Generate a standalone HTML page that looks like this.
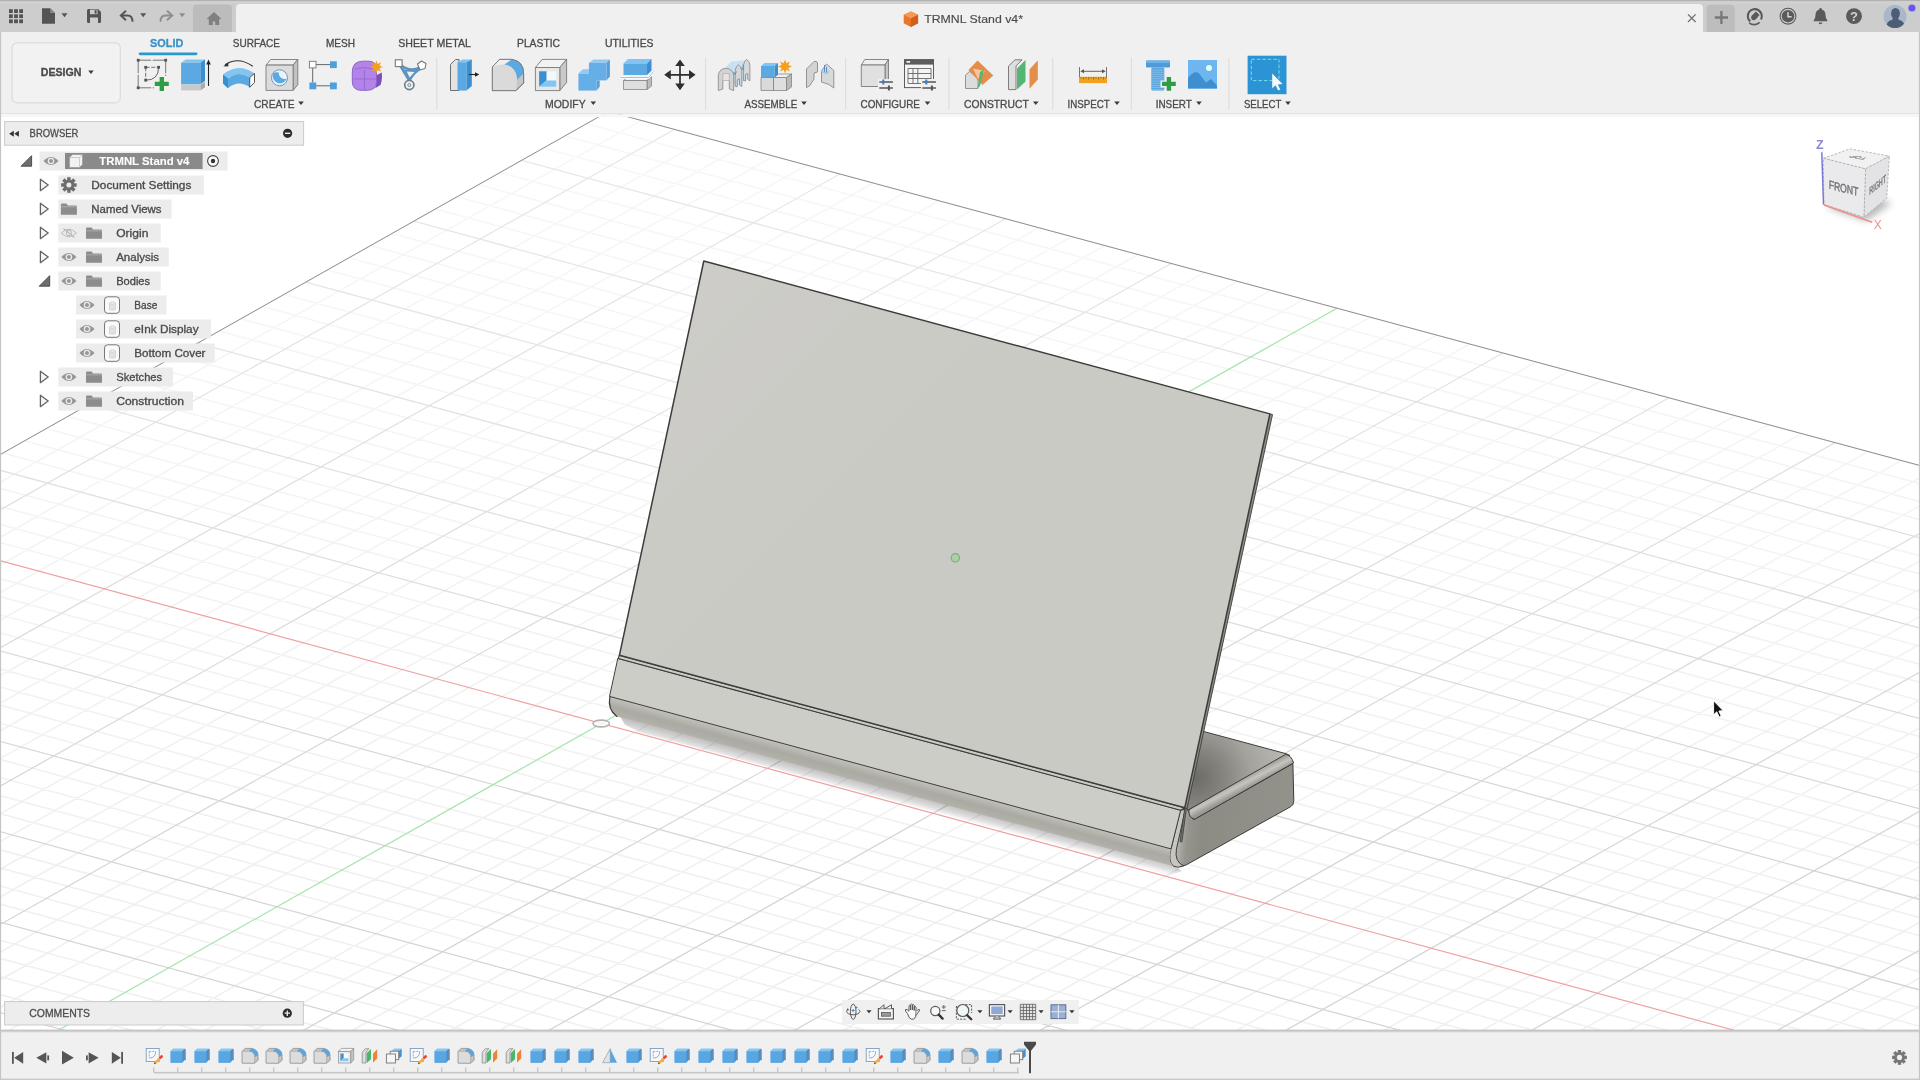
<!DOCTYPE html>
<html><head><meta charset="utf-8"><title>TRMNL Stand v4</title>
<style>
html,body{margin:0;padding:0;background:#fff;overflow:hidden;width:1920px;height:1080px}
svg{position:absolute;left:0;top:0;display:block;filter:blur(0.45px)}
text{font-family:"Liberation Sans",sans-serif}
</style></head><body>
<svg width="1920" height="1080" viewBox="0 0 1920 1080">
<defs><clipPath id="cv"><rect x="0" y="114" width="1920" height="917"/></clipPath></defs>
<rect x="0" y="0" width="1920" height="1080" fill="#ffffff"/>
<!-- grid -->
<g clip-path="url(#cv)" fill="none" shape-rendering="geometricPrecision">
<path d="M-884.0 953.5L608.2 111.5M-850.9 962.5L641.3 120.4M-784.8 980.4L707.5 138.3M-751.8 989.4L740.6 147.2M-718.7 998.4L773.7 156.2M-685.7 1007.4L806.8 165.1M-619.5 1025.4L873.0 183.0M-586.5 1034.4L906.1 191.9M-553.4 1043.4L939.3 200.8M-520.3 1052.3L972.4 209.8M-454.1 1070.3L1038.7 227.7M-421.1 1079.3L1071.8 236.6M-388.0 1088.3L1104.9 245.6M-354.9 1097.3L1138.1 254.5M-288.7 1115.3L1204.4 272.4M-255.6 1124.3L1237.5 281.3M-222.5 1133.3L1270.7 290.3M-189.3 1142.3L1303.9 299.2M-123.1 1160.3L1370.2 317.2M-90.0 1169.3L1403.4 326.1M-56.9 1178.3L1436.6 335.1M-23.7 1187.3L1469.7 344.0M42.5 1205.4L1536.1 361.9M75.7 1214.4L1569.3 370.9M108.8 1223.4L1602.5 379.8M142.0 1232.4L1635.7 388.8M208.3 1250.4L1702.1 406.7M241.4 1259.4L1735.3 415.7M274.6 1268.4L1768.5 424.7M307.8 1277.5L1801.7 433.6M374.1 1295.5L1868.2 451.5M407.3 1304.5L1901.4 460.5M440.4 1313.5L1934.6 469.5M473.6 1322.6L1967.9 478.5M540.0 1340.6L2034.3 496.4M573.2 1349.6L2067.6 505.4M606.4 1358.6L2100.8 514.3M639.6 1367.7L2134.1 523.3M706.0 1385.7L2200.6 541.3M739.2 1394.8L2233.9 550.2M772.4 1403.8L2267.1 559.2M805.6 1412.8L2300.4 568.2M872.1 1430.9L2366.9 586.2M905.3 1439.9L2400.2 595.1M938.5 1448.9L2433.5 604.1M971.8 1458.0L2466.8 613.1M1038.2 1476.0L2533.4 631.1M1071.5 1485.1L2566.7 640.1M1104.7 1494.1L2600.0 649.0M1138.0 1503.2L2633.3 658.0M1204.5 1521.2L2699.9 676.0M1237.8 1530.3L2733.2 685.0M1271.0 1539.3L2766.5 694.0M1304.3 1548.4L2799.8 703.0M-862.3 941.3L1359.3 1545.2M-840.7 929.1L1380.9 1532.9M-819.0 916.8L1402.6 1520.6M-797.4 904.6L1424.3 1508.4M-754.1 880.2L1467.7 1483.8M-732.5 868.0L1489.4 1471.6M-710.8 855.8L1511.1 1459.3M-689.2 843.6L1532.8 1447.1M-645.9 819.2L1576.1 1422.5M-624.3 807.0L1597.8 1410.3M-602.7 794.7L1619.5 1398.0M-581.0 782.5L1641.2 1385.8M-537.8 758.1L1684.6 1361.3M-516.1 745.9L1706.3 1349.0M-494.5 733.7L1727.9 1336.7M-472.9 721.5L1749.6 1324.5M-429.6 697.1L1793.0 1300.0M-408.0 684.9L1814.7 1287.7M-386.3 672.7L1836.4 1275.5M-364.7 660.5L1858.0 1263.2M-321.4 636.1L1901.4 1238.7M-299.8 623.8L1923.1 1226.4M-278.2 611.6L1944.8 1214.2M-256.5 599.4L1966.4 1201.9M-213.3 575.0L2009.8 1177.4M-191.7 562.8L2031.5 1165.2M-170.0 550.6L2053.1 1152.9M-148.4 538.4L2074.8 1140.7M-105.2 514.0L2118.2 1116.1M-83.5 501.8L2139.8 1103.9M-61.9 489.6L2161.5 1091.6M-40.3 477.4L2183.2 1079.4M2.9 453.0L2226.5 1054.9M24.6 440.8L2248.2 1042.6M46.2 428.6L2269.9 1030.4M67.8 416.4L2291.5 1018.1M111.1 392.0L2334.9 993.6M132.7 379.8L2356.6 981.4M154.3 367.6L2378.2 969.1M175.9 355.4L2399.9 956.9M219.1 331.0L2443.2 932.4M240.8 318.8L2464.9 920.1M262.4 306.6L2486.6 907.9M284.0 294.4L2508.2 895.7M327.2 270.0L2551.6 871.2M348.8 257.8L2573.2 858.9M370.4 245.6L2594.9 846.7M392.1 233.4L2616.5 834.4M435.3 209.0L2659.9 809.9M456.9 196.8L2681.5 797.7M478.5 184.7L2703.2 785.4M500.1 172.5L2724.9 773.2M543.3 148.1L2768.2 748.7M564.9 135.9L2789.8 736.5M586.6 123.7L2811.5 724.2M608.2 111.5L2833.1 712.0" stroke="#f0f0f0" stroke-width="1.6"/>
<path d="M-817.9 971.5L674.4 129.4M-652.6 1016.4L839.9 174.0M-487.2 1061.3L1005.5 218.7M-321.8 1106.3L1171.2 263.5M9.4 1196.4L1502.9 353.0M175.1 1241.4L1668.9 397.8M340.9 1286.5L1835.0 442.6M506.8 1331.6L2001.1 487.4M672.8 1376.7L2167.3 532.3M838.8 1421.8L2333.7 577.2M1005.0 1467.0L2500.1 622.1M1171.2 1512.2L2666.6 667.0M1337.6 1557.4L2833.1 712.0M-884.0 953.5L1337.6 1557.4M-775.8 892.4L1446.0 1496.1M-667.6 831.4L1554.5 1434.8M-559.4 770.3L1662.9 1373.5M-451.2 709.3L1771.3 1312.2M-343.1 648.3L1879.7 1250.9M-234.9 587.2L1988.1 1189.7M-18.7 465.2L2204.9 1067.1M89.4 404.2L2313.2 1005.9M197.5 343.2L2421.6 944.6M305.6 282.2L2529.9 883.4M413.7 221.2L2638.2 822.2M521.7 160.3L2746.5 761.0" stroke="#d4d4d4" stroke-width="1.25"/>
<linearGradient id="gFade" gradientUnits="userSpaceOnUse" x1="0" y1="114" x2="0" y2="900"><stop offset="0" stop-color="#fff" stop-opacity="0.5"/><stop offset="0.45" stop-color="#fff" stop-opacity="0.3"/><stop offset="1" stop-color="#fff" stop-opacity="0"/></linearGradient>
<rect x="0" y="114" width="1920" height="917" fill="url(#gFade)" stroke="none"/>
<path d="M-126.8 526.2L2096.5 1128.4" stroke="#ef9f9f" stroke-width="1.15"/>
<path d="M-156.2 1151.3L1337.0 308.2" stroke="#a2e4a8" stroke-width="1.2"/>
<path d="M-884.0 953.5L608.2 111.5M608.2 111.5L2833.1 712.0" stroke="#8f8f8f" stroke-width="1"/>
</g>
<!-- model -->
<defs>
<linearGradient id="gFil" gradientUnits="userSpaceOnUse" x1="890" y1="772" x2="884.6" y2="792">
<stop offset="0" stop-color="#c4c3bd"/><stop offset="0.12" stop-color="#bcbbb4"/><stop offset="0.45" stop-color="#abaaa2"/><stop offset="0.75" stop-color="#b1b0a8"/><stop offset="1" stop-color="#c1c0b9"/></linearGradient>
<radialGradient id="gTop" gradientUnits="userSpaceOnUse" cx="1196" cy="778" r="92">
<stop offset="0" stop-color="#6c6b66"/><stop offset="0.3" stop-color="#85847e"/><stop offset="0.6" stop-color="#a3a29c"/><stop offset="1" stop-color="#bab9b3"/></radialGradient>
<linearGradient id="gLip" gradientUnits="userSpaceOnUse" x1="1238" y1="781" x2="1243" y2="790.5">
<stop offset="0" stop-color="#a5a49e"/><stop offset="0.45" stop-color="#c6c5bf"/><stop offset="1" stop-color="#9a9993"/></linearGradient>
<linearGradient id="gSide" gradientUnits="userSpaceOnUse" x1="1178" y1="838" x2="1292" y2="850">
<stop offset="0" stop-color="#b3b2ac"/><stop offset="0.08" stop-color="#96958d"/><stop offset="0.2" stop-color="#8d8c84"/><stop offset="1" stop-color="#94938b"/></linearGradient>
<linearGradient id="gCor" gradientUnits="userSpaceOnUse" x1="1172" y1="838" x2="1184" y2="841">
<stop offset="0" stop-color="#c6c5c1"/><stop offset="0.5" stop-color="#b7b6b0"/><stop offset="1" stop-color="#908f87"/></linearGradient>
<linearGradient id="gPanel" gradientUnits="userSpaceOnUse" x1="700" y1="300" x2="1200" y2="800">
<stop offset="0" stop-color="#cdccc8"/><stop offset="0.42" stop-color="#c9cac4"/><stop offset="1" stop-color="#c9cac4"/></linearGradient>
</defs>
<g stroke-linejoin="round" stroke-linecap="round">
<linearGradient id="gSh" gradientUnits="userSpaceOnUse" x1="890" y1="790" x2="887.5" y2="799.5"><stop offset="0" stop-color="#000" stop-opacity="0.23"/><stop offset="0.6" stop-color="#000" stop-opacity="0.13"/><stop offset="1" stop-color="#000" stop-opacity="0.03"/></linearGradient>
<polygon points="620.0,716.0 1172.0,864.5 1182.0,871.0 1170.0,875.5 642.0,733.0 625.0,725.0" fill="url(#gSh)"/>
<polygon points="1196.0,729.4 1286.0,753.7 1290.0,755.5 1188.9,809.7 1182.0,811.0" fill="url(#gTop)" stroke="#3c3c3a" stroke-width="1"/>
<path d="M1194.0 819.5 L1292.9 763.6 L1293.8 800.5 Q1293.8 805 1290.8 806.6 L1186 865 Q1180 867.6 1175 866 L1172 850 L1181 812 L1186 808 Z" fill="url(#gSide)" stroke="#3c3c3a" stroke-width="1"/>
<path d="M1188.9 809.7 L1285.6 754.4 Q1291.5 755.5 1293.6 762.9 L1194.6 819.2 Q1188.0 817.8 1188.9 809.7 Z" fill="url(#gLip)" stroke="#3c3c3a" stroke-width="1"/>
<path d="M1180.7 810.2 L1185.3 809.4 L1176.4 849.3 Q1174.3 861.5 1183.5 865.8 Q1178 868.5 1173.5 866.2 Q1167.5 861 1171.0 848.9 Z" fill="#c7c6c2" stroke="#3c3c3a" stroke-width="1"/>
<path d="M609.9 696.5 L1171.0 848.9 Q1167.5 861 1173.5 866.2 L616.9 716.4 Q607.5 709.5 609.9 696.5 Z" fill="url(#gFil)" stroke="none"/>
<path d="M609.9 696.5 Q607.3 709.5 616.9 716.4" fill="none" stroke="#3c3c3a" stroke-width="1.2"/>
<polygon points="618.2,658.5 1180.7,810.2 1171.0,848.9 609.9,696.5" fill="#cdcdc8" stroke="#3c3c3a" stroke-width="1"/>
<polygon points="619.4,655.3 1184.8,807.7 1180.7,810.2 618.2,658.5" fill="#cbcac4" stroke="#3c3c3a" stroke-width="1.1"/>
<polygon points="1269.9,413.9 1272.5,414.6 1187.0,808.6 1184.8,807.7" fill="#8f8e88" stroke="#3c3c3a" stroke-width="0.9"/>
<path d="M1186.3 809.6 L1181.9 842 L1180 841.6 L1184.5 809.8" fill="#77766f" stroke="#3c3c3a" stroke-width="0.8"/>
<polygon points="703.8,261.0 1269.9,413.9 1184.8,807.7 619.4,655.3" fill="url(#gPanel)" stroke="#3c3c3a" stroke-width="1.5"/>
<circle cx="955.3" cy="557.8" r="4.2" fill="#a6d3a3" stroke="#8fa08c" stroke-width="1.1"/>
<ellipse cx="601.2" cy="723.5" rx="8.2" ry="3.4" fill="#fff" fill-opacity="0.8" stroke="#b3b3b3" stroke-width="1.6"/>
</g>
<!-- chrome_bg -->
<rect x="0" y="0" width="1920" height="32" fill="#cdcdcd"/>
<rect x="0" y="0" width="1920" height="1.3" fill="#b2b2b2"/>
<rect x="0" y="1.3" width="1920" height="2.4" fill="#d1d1d1"/>
<rect x="0" y="32" width="1920" height="82" fill="#f0f0f0"/>
<rect x="0" y="113.2" width="1920" height="1" fill="#e2e2e2"/>
<rect x="0" y="114.2" width="1920" height="3" fill="#f6f6f6"/>
<path d="M193 32V8.5q0-4 4-4h31q4 0 4 4V32z" fill="#bcbcbc"/>
<path d="M236 32V8q0-4 4-4H1699q4 0 4 4V32z" fill="#f0f0f0"/>
<path d="M1706.5 32V8.8q0-4 4-4h20.3q4 0 4 4V32z" fill="#bdbdbd"/>
<rect x="0" y="1030" width="1920" height="50" fill="#f0f0f0"/>
<rect x="0" y="1029.6" width="1920" height="2.2" fill="#c4c4c4"/>
<rect x="0" y="1031.8" width="1920" height="1" fill="#e6e6e6"/>
<rect x="0" y="1078.6" width="1920" height="1.4" fill="#c8c8c8"/>
<rect x="0" y="32" width="1.1" height="1048" fill="#c4c4c4"/>
<rect x="1918.9" y="32" width="1.1" height="1048" fill="#c6c6c6"/>
<!-- viewcube -->
<defs><filter id="vsh" x="-50%" y="-50%" width="200%" height="200%"><feGaussianBlur stdDeviation="3.500"/></filter></defs>
<polygon points="1826,207 1866,221 1892,203 1862,194" fill="#8a8a8a" opacity="0.6" filter="url(#vsh)"/>
<polygon points="1823.300,158.300 1850,148.900 1889.400,156.100 1865.600,168.900" fill="#f1f1f2" stroke="#a9a9a9" stroke-width="0.800" stroke-dasharray="2.500 1.500"/>
<polygon points="1865.600,168.900 1889.400,156.100 1886.700,198.300 1863.900,217.200" fill="#e3e3e5" stroke="#a9a9a9" stroke-width="0.800" stroke-dasharray="2.500 1.500"/>
<polygon points="1823.300,158.300 1865.600,168.900 1863.900,217.200 1823.900,204.400" fill="#eaeaec" stroke="#a9a9a9" stroke-width="0.800" stroke-dasharray="2.500 1.500"/>
<text transform="matrix(1 0.250 -0.020 1 1828.700 188.600)" font-size="12" fill="#747474" stroke="#747474" stroke-width="0.45" textLength="29.500" lengthAdjust="spacingAndGlyphs">FRONT</text>
<text transform="matrix(0.900 -0.720 0 1.150 1869.300 195)" font-size="9" fill="#777" stroke="#777" stroke-width="0.4" textLength="18.500" lengthAdjust="spacingAndGlyphs">RIGHT</text>
<text transform="matrix(-0.950 -0.200 0.700 -0.300 1867.500 158.300)" font-size="8.5" fill="#808080" stroke="#808080" stroke-width="0.4" textLength="16" lengthAdjust="spacingAndGlyphs">TOP</text>
<path d="M1821.800 152.200L1823.500 204.600" stroke="#7a78d2" stroke-width="1.500"/>
<path d="M1823.900 205L1872.200 222.200" stroke="#ee8f8f" stroke-width="1.500"/>
<text x="1816" y="148.500" font-size="12.500" font-weight="bold" fill="#8a88d8">Z</text>
<text x="1873.800" y="229" font-size="12" fill="#ec8c8c">X</text>
<!-- browser -->
<rect x="4.600" y="121.600" width="299" height="23.600" fill="#ededed" stroke="#cbcbcb" stroke-width="1"/>
<path d="M9.200 133.800L13.800 130.800V136.800zM14.300 133.800L18.900 130.800V136.800z" fill="#333"/>
<text x="29.6" y="136.8" font-size="10.4" fill="#4d4d4d" stroke="#4d4d4d" stroke-width="0.30" font-weight="normal" textLength="48.8" lengthAdjust="spacingAndGlyphs">BROWSER</text>
<circle cx="287.600" cy="133.300" r="4.600" fill="#2c2c2c"/><rect x="284.900" y="132.600" width="5.400" height="1.400" fill="#eee"/>
<rect x="39.6" y="151.5" width="188.0" height="19" fill="#ececec"/>
<path d="M31.6 166.2h-10.500l10.500-10.500z" fill="#6e6e6e" stroke="#444" stroke-width="0.900" stroke-linejoin="round"/>
<path d="M43.5 161.0Q51.0 152.8 58.5 161.0Q51.0 169.2 43.5 161.0z" fill="#969696"/><circle cx="51.0" cy="161.0" r="3.3" fill="#ececec"/><circle cx="51.0" cy="161.0" r="2" fill="#969696"/>
<rect x="65" y="153" width="137.600" height="16" fill="#8a8a8a"/>
<path d="M69.500 157.500L72.500 154.500H82.500V164.500L79.500 167.500H69.500z" fill="#f2f2f2" stroke="#9a9a9a" stroke-width="0.700"/><path d="M69.500 157.500H79.500V167.500M79.500 157.500L82.500 154.500" fill="none" stroke="#bdbdbd" stroke-width="0.700"/>
<text x="99.3" y="165.1" font-size="11.0" fill="#ffffff" stroke="#ffffff" stroke-width="0.10" font-weight="bold" textLength="90.1" lengthAdjust="spacingAndGlyphs">TRMNL Stand v4</text>
<circle cx="213" cy="161" r="5.400" fill="#fafafa" stroke="#444" stroke-width="1.100"/><circle cx="213" cy="161" r="2.200" fill="#333"/>
<rect x="58.3" y="175.5" width="145.5" height="19" fill="#ececec"/>
<path d="M40.4 179.3v11.400l7.800-5.700z" fill="#f6f6f6" stroke="#636363" stroke-width="1.300" stroke-linejoin="round"/>
<g transform="translate(68.900 185)"><rect x="-1.700" y="-7.800" width="3.400" height="15.600" fill="#6e6e6e" transform="rotate(0)"/><rect x="-1.700" y="-7.800" width="3.400" height="15.600" fill="#6e6e6e" transform="rotate(45)"/><rect x="-1.700" y="-7.800" width="3.400" height="15.600" fill="#6e6e6e" transform="rotate(90)"/><rect x="-1.700" y="-7.800" width="3.400" height="15.600" fill="#6e6e6e" transform="rotate(135)"/><circle r="5.600" fill="#6e6e6e"/><circle r="2.500" fill="#ececec"/></g>
<text x="91.3" y="188.8" font-size="10.4" fill="#4a4a4a" stroke="#4a4a4a" stroke-width="0.30" font-weight="normal" textLength="100.1" lengthAdjust="spacingAndGlyphs">Document Settings</text>
<rect x="58.3" y="199.5" width="113.3" height="19" fill="#ececec"/>
<path d="M40.4 203.3v11.400l7.800-5.700z" fill="#f6f6f6" stroke="#636363" stroke-width="1.300" stroke-linejoin="round"/>
<path d="M60.9 214.8v-10.200q0-1 1-1h4.500l1.500 1.800h8q1 0 1 1v8.400z" fill="#8c8c8c"/><path d="M60.9 206.8h16" stroke="#b5b5b5" stroke-width="0.800"/>
<text x="91.3" y="212.8" font-size="10.4" fill="#4a4a4a" stroke="#4a4a4a" stroke-width="0.30" font-weight="normal" textLength="70.3" lengthAdjust="spacingAndGlyphs">Named Views</text>
<rect x="58.3" y="223.5" width="102.4" height="19" fill="#ececec"/>
<path d="M40.4 227.3v11.400l7.800-5.700z" fill="#f6f6f6" stroke="#636363" stroke-width="1.300" stroke-linejoin="round"/>
<path d="M61.4 233.0Q68.9 225.4 76.4 233.0Q68.9 240.6 61.4 233.0z" fill="none" stroke="#b9b9b9" stroke-width="1"/><circle cx="68.9" cy="233.0" r="2.6" fill="none" stroke="#b9b9b9" stroke-width="1"/><path d="M63.4 228.5L74.4 237.5" stroke="#b9b9b9" stroke-width="1.1"/>
<path d="M86.0 238.8v-10.200q0-1 1-1h4.500l1.500 1.800h8q1 0 1 1v8.400z" fill="#8c8c8c"/><path d="M86.0 230.8h16" stroke="#b5b5b5" stroke-width="0.800"/>
<text x="116.2" y="236.8" font-size="10.4" fill="#4a4a4a" stroke="#4a4a4a" stroke-width="0.30" font-weight="normal" textLength="32.2" lengthAdjust="spacingAndGlyphs">Origin</text>
<rect x="58.3" y="247.5" width="110.5" height="19" fill="#ececec"/>
<path d="M40.4 251.3v11.400l7.800-5.700z" fill="#f6f6f6" stroke="#636363" stroke-width="1.300" stroke-linejoin="round"/>
<path d="M61.4 257.0Q68.9 248.8 76.4 257.0Q68.9 265.2 61.4 257.0z" fill="#969696"/><circle cx="68.9" cy="257.0" r="3.3" fill="#ececec"/><circle cx="68.9" cy="257.0" r="2" fill="#969696"/>
<path d="M86.0 262.8v-10.200q0-1 1-1h4.500l1.500 1.800h8q1 0 1 1v8.400z" fill="#8c8c8c"/><path d="M86.0 254.8h16" stroke="#b5b5b5" stroke-width="0.800"/>
<text x="116.2" y="260.8" font-size="10.4" fill="#4a4a4a" stroke="#4a4a4a" stroke-width="0.30" font-weight="normal" textLength="42.8" lengthAdjust="spacingAndGlyphs">Analysis</text>
<rect x="58.3" y="271.5" width="102.4" height="19" fill="#ececec"/>
<path d="M49.7 286.2h-10.500l10.500-10.500z" fill="#6e6e6e" stroke="#444" stroke-width="0.900" stroke-linejoin="round"/>
<path d="M61.4 281.0Q68.9 272.8 76.4 281.0Q68.9 289.2 61.4 281.0z" fill="#969696"/><circle cx="68.9" cy="281.0" r="3.3" fill="#ececec"/><circle cx="68.9" cy="281.0" r="2" fill="#969696"/>
<path d="M86.0 286.8v-10.200q0-1 1-1h4.500l1.500 1.800h8q1 0 1 1v8.400z" fill="#8c8c8c"/><path d="M86.0 278.8h16" stroke="#b5b5b5" stroke-width="0.800"/>
<text x="116.2" y="284.8" font-size="10.4" fill="#4a4a4a" stroke="#4a4a4a" stroke-width="0.30" font-weight="normal" textLength="33.9" lengthAdjust="spacingAndGlyphs">Bodies</text>
<rect x="76.0" y="295.5" width="90.5" height="19" fill="#ececec"/>
<path d="M79.5 305.0Q87.0 296.8 94.5 305.0Q87.0 313.2 79.5 305.0z" fill="#969696"/><circle cx="87.0" cy="305.0" r="3.3" fill="#ececec"/><circle cx="87.0" cy="305.0" r="2" fill="#969696"/>
<rect x="104.5" y="296.8" width="15" height="16.500" rx="3.200" fill="#fbfbfb" stroke="#777" stroke-width="1"/><path d="M109.5 303.0v6.500q3 1.600 6 0v-6.500" fill="#e2e2e2" stroke="#c4c4c4" stroke-width="0.600"/><ellipse cx="112.5" cy="303.0" rx="3" ry="1.200" fill="#f0f0f0" stroke="#c4c4c4" stroke-width="0.600"/>
<text x="134.3" y="308.8" font-size="10.4" fill="#4a4a4a" stroke="#4a4a4a" stroke-width="0.30" font-weight="normal" textLength="23.0" lengthAdjust="spacingAndGlyphs">Base</text>
<rect x="76.0" y="319.5" width="135.0" height="19" fill="#ececec"/>
<path d="M79.5 329.0Q87.0 320.8 94.5 329.0Q87.0 337.2 79.5 329.0z" fill="#969696"/><circle cx="87.0" cy="329.0" r="3.3" fill="#ececec"/><circle cx="87.0" cy="329.0" r="2" fill="#969696"/>
<rect x="104.5" y="320.8" width="15" height="16.500" rx="3.200" fill="#fbfbfb" stroke="#777" stroke-width="1"/><path d="M109.5 327.0v6.500q3 1.600 6 0v-6.500" fill="#e2e2e2" stroke="#c4c4c4" stroke-width="0.600"/><ellipse cx="112.5" cy="327.0" rx="3" ry="1.200" fill="#f0f0f0" stroke="#c4c4c4" stroke-width="0.600"/>
<text x="134.3" y="332.8" font-size="10.4" fill="#4a4a4a" stroke="#4a4a4a" stroke-width="0.30" font-weight="normal" textLength="64.3" lengthAdjust="spacingAndGlyphs">eInk Display</text>
<rect x="76.0" y="343.5" width="138.7" height="19" fill="#ececec"/>
<path d="M79.5 353.0Q87.0 344.8 94.5 353.0Q87.0 361.2 79.5 353.0z" fill="#969696"/><circle cx="87.0" cy="353.0" r="3.3" fill="#ececec"/><circle cx="87.0" cy="353.0" r="2" fill="#969696"/>
<rect x="104.5" y="344.8" width="15" height="16.500" rx="3.200" fill="#fbfbfb" stroke="#777" stroke-width="1"/><path d="M109.5 351.0v6.500q3 1.600 6 0v-6.500" fill="#e2e2e2" stroke="#c4c4c4" stroke-width="0.600"/><ellipse cx="112.5" cy="351.0" rx="3" ry="1.200" fill="#f0f0f0" stroke="#c4c4c4" stroke-width="0.600"/>
<text x="134.3" y="356.8" font-size="10.4" fill="#4a4a4a" stroke="#4a4a4a" stroke-width="0.30" font-weight="normal" textLength="71.2" lengthAdjust="spacingAndGlyphs">Bottom Cover</text>
<rect x="58.3" y="367.5" width="114.7" height="19" fill="#ececec"/>
<path d="M40.4 371.3v11.400l7.800-5.700z" fill="#f6f6f6" stroke="#636363" stroke-width="1.300" stroke-linejoin="round"/>
<path d="M61.4 377.0Q68.9 368.8 76.4 377.0Q68.9 385.2 61.4 377.0z" fill="#969696"/><circle cx="68.9" cy="377.0" r="3.3" fill="#ececec"/><circle cx="68.9" cy="377.0" r="2" fill="#969696"/>
<path d="M86.0 382.8v-10.200q0-1 1-1h4.500l1.500 1.800h8q1 0 1 1v8.400z" fill="#8c8c8c"/><path d="M86.0 374.8h16" stroke="#b5b5b5" stroke-width="0.800"/>
<text x="116.2" y="380.8" font-size="10.4" fill="#4a4a4a" stroke="#4a4a4a" stroke-width="0.30" font-weight="normal" textLength="46.0" lengthAdjust="spacingAndGlyphs">Sketches</text>
<rect x="58.3" y="391.5" width="134.6" height="19" fill="#ececec"/>
<path d="M40.4 395.3v11.400l7.800-5.700z" fill="#f6f6f6" stroke="#636363" stroke-width="1.300" stroke-linejoin="round"/>
<path d="M61.4 401.0Q68.9 392.8 76.4 401.0Q68.9 409.2 61.4 401.0z" fill="#969696"/><circle cx="68.9" cy="401.0" r="3.3" fill="#ececec"/><circle cx="68.9" cy="401.0" r="2" fill="#969696"/>
<path d="M86.0 406.8v-10.200q0-1 1-1h4.500l1.500 1.800h8q1 0 1 1v8.400z" fill="#8c8c8c"/><path d="M86.0 398.8h16" stroke="#b5b5b5" stroke-width="0.800"/>
<text x="116.2" y="404.8" font-size="10.4" fill="#4a4a4a" stroke="#4a4a4a" stroke-width="0.30" font-weight="normal" textLength="67.8" lengthAdjust="spacingAndGlyphs">Construction</text>
<!-- toolbar -->
<rect x="12" y="42.800" width="108.300" height="60" rx="5" fill="#f2f2f2" stroke="#dcdcdc" stroke-width="1.200"/>
<text x="40.8" y="75.8" font-size="10.4" fill="#4a4a4a" stroke="#4a4a4a" stroke-width="0.30" font-weight="bold" textLength="40.7" lengthAdjust="spacingAndGlyphs">DESIGN</text>
<path d="M88.2 70.6h5.6l-2.8 3.3z" fill="#3c3c3c"/>
<text x="150.0" y="47.0" font-size="10.4" fill="#3a93c8" stroke="#3a93c8" stroke-width="0.30" font-weight="bold" textLength="33.3" lengthAdjust="spacingAndGlyphs">SOLID</text>
<rect x="138.700" y="52.400" width="58.800" height="2.800" rx="1.400" fill="#2d97cc"/>
<text x="232.8" y="47.0" font-size="10.4" fill="#4a4a4a" stroke="#4a4a4a" stroke-width="0.30" font-weight="normal" textLength="47.2" lengthAdjust="spacingAndGlyphs">SURFACE</text>
<text x="326.0" y="47.0" font-size="10.4" fill="#4a4a4a" stroke="#4a4a4a" stroke-width="0.30" font-weight="normal" textLength="29.0" lengthAdjust="spacingAndGlyphs">MESH</text>
<text x="398.3" y="47.0" font-size="10.4" fill="#4a4a4a" stroke="#4a4a4a" stroke-width="0.30" font-weight="normal" textLength="72.7" lengthAdjust="spacingAndGlyphs">SHEET METAL</text>
<text x="517.0" y="47.0" font-size="10.4" fill="#4a4a4a" stroke="#4a4a4a" stroke-width="0.30" font-weight="normal" textLength="43.0" lengthAdjust="spacingAndGlyphs">PLASTIC</text>
<text x="605.0" y="47.0" font-size="10.4" fill="#4a4a4a" stroke="#4a4a4a" stroke-width="0.30" font-weight="normal" textLength="48.5" lengthAdjust="spacingAndGlyphs">UTILITIES</text>
<text x="254.0" y="107.8" font-size="10.4" fill="#4a4a4a" stroke="#4a4a4a" stroke-width="0.30" font-weight="normal" textLength="40.5" lengthAdjust="spacingAndGlyphs">CREATE</text>
<path d="M298.2 101.6h5.6l-2.8 3.3z" fill="#3a3a3a"/>
<text x="545.0" y="107.8" font-size="10.4" fill="#4a4a4a" stroke="#4a4a4a" stroke-width="0.30" font-weight="normal" textLength="40.7" lengthAdjust="spacingAndGlyphs">MODIFY</text>
<path d="M590.5 101.6h5.6l-2.8 3.3z" fill="#3a3a3a"/>
<text x="744.5" y="107.8" font-size="10.4" fill="#4a4a4a" stroke="#4a4a4a" stroke-width="0.30" font-weight="normal" textLength="52.8" lengthAdjust="spacingAndGlyphs">ASSEMBLE</text>
<path d="M801.2 101.6h5.6l-2.8 3.3z" fill="#3a3a3a"/>
<text x="860.5" y="107.8" font-size="10.4" fill="#4a4a4a" stroke="#4a4a4a" stroke-width="0.30" font-weight="normal" textLength="59.5" lengthAdjust="spacingAndGlyphs">CONFIGURE</text>
<path d="M924.7 101.6h5.6l-2.8 3.3z" fill="#3a3a3a"/>
<text x="964.0" y="107.8" font-size="10.4" fill="#4a4a4a" stroke="#4a4a4a" stroke-width="0.30" font-weight="normal" textLength="64.7" lengthAdjust="spacingAndGlyphs">CONSTRUCT</text>
<path d="M1033.0 101.6h5.6l-2.8 3.3z" fill="#3a3a3a"/>
<text x="1067.6" y="107.8" font-size="10.4" fill="#4a4a4a" stroke="#4a4a4a" stroke-width="0.30" font-weight="normal" textLength="42.2" lengthAdjust="spacingAndGlyphs">INSPECT</text>
<path d="M1114.2 101.6h5.6l-2.8 3.3z" fill="#3a3a3a"/>
<text x="1155.7" y="107.8" font-size="10.4" fill="#4a4a4a" stroke="#4a4a4a" stroke-width="0.30" font-weight="normal" textLength="36.1" lengthAdjust="spacingAndGlyphs">INSERT</text>
<path d="M1196.2 101.6h5.6l-2.8 3.3z" fill="#3a3a3a"/>
<text x="1243.9" y="107.8" font-size="10.4" fill="#4a4a4a" stroke="#4a4a4a" stroke-width="0.30" font-weight="normal" textLength="37.5" lengthAdjust="spacingAndGlyphs">SELECT</text>
<path d="M1285.2 101.6h5.6l-2.8 3.3z" fill="#3a3a3a"/>
<rect x="436.2" y="57.500" width="1.200" height="52" fill="#dedede"/>
<rect x="705.0" y="57.500" width="1.200" height="52" fill="#dedede"/>
<rect x="845.0" y="57.500" width="1.200" height="52" fill="#dedede"/>
<rect x="948.4" y="57.500" width="1.200" height="52" fill="#dedede"/>
<rect x="1052.1" y="57.500" width="1.200" height="52" fill="#dedede"/>
<rect x="1130.8" y="57.500" width="1.200" height="52" fill="#dedede"/>
<rect x="1228.3" y="57.500" width="1.200" height="52" fill="#dedede"/>
<path d="M138.200 60.200H165.700M138.200 60.200V87.800M165.700 60.200V76M138.200 87.800H154" fill="none" stroke="#6a6a6a" stroke-width="0.900" stroke-dasharray="13 1.500"/><rect x="136.8" y="58.8" width="2.800" height="2.800" fill="#555"/><rect x="164.3" y="58.8" width="2.800" height="2.800" fill="#555"/><rect x="136.8" y="86.4" width="2.800" height="2.800" fill="#555"/><path d="M145.700 67.300H158.600M145.700 67.300V80.200" fill="none" stroke="#666" stroke-width="0.900" stroke-dasharray="4 1.500"/><path d="M158.600 67.300Q158.600 80.200 145.700 80.200" fill="none" stroke="#666" stroke-width="1"/><rect x="144.3" y="65.9" width="2.800" height="2.800" fill="#555"/><rect x="157.2" y="65.9" width="2.800" height="2.800" fill="#555"/><rect x="144.3" y="78.8" width="2.800" height="2.800" fill="#555"/><path d="M154.800 83.900H168.800M161.800 76.900V90.900" stroke="#2f9d46" stroke-width="4.400" fill="none"/>
<polygon points="181.1,84.8 185.8,82.0 205.0,82.0 200.3,84.8" fill="#e8e8e8"/><polygon points="200.3,84.8 205.0,82.0 205.0,87.6 200.3,90.4" fill="#ababab"/><polygon points="181.1,84.8 200.3,84.8 200.3,90.4 181.1,90.4" fill="#c9c9c9"/><polygon points="181.1,62.8 185.8,59.5 205.0,59.5 200.3,62.8" fill="#82c4f2"/><polygon points="200.3,62.8 205.0,59.5 205.0,81.0 200.3,84.3" fill="#3b8fd1"/><polygon points="181.1,62.8 200.3,62.8 200.3,84.3 181.1,84.3" fill="#5aa9e2"/><path d="M208.500 86V62" stroke="#222" stroke-width="1.100"/><path d="M206.200 64.500L208.500 59.500L210.800 64.500z" fill="#222"/>
<path d="M252.800 66.200Q238 56 225 64.800" fill="none" stroke="#333" stroke-width="1.100"/><path d="M223.400 66.200L228.500 62.200L228.200 66.600z" fill="#333"/><path d="M223 74.500Q238.500 62 254.500 73.500L249.700 77.500Q238.500 70 228 78.500z" fill="#82c4f2"/><path d="M223 74.500L228 78.500Q238.500 70 249.700 77.500V87.300Q238.500 79.500 228 88.200L223 83.500z" fill="#5aa9e2"/><path d="M223 74.500L228 78.500V88.200L223 83.500z" fill="#3b8fd1"/><polygon points="249.7,77.5 254.5,73.5 254.5,82.5 249.7,87.3" fill="#fafafa" stroke="#444" stroke-width="0.9" stroke-linejoin="round"/>
<polygon points="266.0,65.1 270.7,59.5 297.8,59.5 293.1,65.1" fill="#ededed" stroke="#7a7a7a" stroke-width="0.9" stroke-linejoin="round"/><polygon points="293.1,65.1 297.8,59.5 297.8,84.8 293.1,90.4" fill="#c2c2c2" stroke="#7a7a7a" stroke-width="0.9" stroke-linejoin="round"/><polygon points="266.0,65.1 293.1,65.1 293.1,90.4 266.0,90.4" fill="#dcdcdc" stroke="#7a7a7a" stroke-width="0.9" stroke-linejoin="round"/><circle cx="279.500" cy="77.800" r="8" fill="#e9f3fb" stroke="#5f8fb5" stroke-width="0.900"/><path d="M273.300 73.200A7.200 7.200 0 1 0 286.700 78.800A6 6 0 0 1 278.800 72.600A7 7 0 0 0 273.300 73.200z" fill="#5aa9e2"/>
<path d="M316 64.600H330M312.700 68V82.500M316 85.800H330" stroke="#666" stroke-width="1" fill="none"/><rect x="309.400" y="61.300" width="6.600" height="6.600" fill="#fff" stroke="#777" stroke-width="0.900"/><rect x="330.0" y="61.3" width="6.800" height="6.800" fill="#4e9fdc"/><rect x="309.4" y="82.5" width="6.800" height="6.800" fill="#4e9fdc"/><rect x="330.0" y="82.5" width="6.800" height="6.800" fill="#4e9fdc"/>
<path d="M375 76L381.800 72.500Q382.500 80 380.500 85L375.500 88z" fill="#7a4fc0"/><path d="M352.300 72Q352.300 61.200 363 61.200H369Q376.500 61.200 376.500 70V82Q376.500 90.300 367 90.300H361Q352.300 90.300 352.300 81z" fill="#b483ea" stroke="#8d66c8" stroke-width="1"/><path d="M353 79H376M364.500 70V90M355 69Q364 66 374 69" stroke="#9469d2" stroke-width="0.900" fill="none"/><polygon points="383.0,67.0 379.5,68.3 381.1,71.7 377.7,70.1 376.4,73.6 375.1,70.1 371.7,71.7 373.3,68.3 369.8,67.0 373.3,65.7 371.7,62.3 375.1,63.9 376.4,60.4 377.7,63.9 381.1,62.3 379.5,65.7" fill="#f5a01c"/>
<path d="M400 65Q404 72 409 80M421 68Q414 72 409.500 80M401.500 65.500Q410 72.500 420 67.500" fill="none" stroke="#5f93bd" stroke-width="2.600"/><path d="M403.500 69.500L417.500 70.500L409.300 80z" fill="#5f93bd"/><path d="M406.800 71.500L414.500 72L409.600 77.500z" fill="#f0f0f0"/><rect x="395.300" y="59.800" width="6.800" height="6.800" fill="#fff" stroke="#777" stroke-width="1.100"/><polygon points="417.5,64.0 421.5,61.0 426.0,63.5 425.0,68.5 420.0,70.0" fill="#fff" stroke="#777" stroke-width="1.1" stroke-linejoin="round"/><circle cx="409.300" cy="85" r="4.600" fill="#f0f0f0" stroke="#6c7f8e" stroke-width="1.700"/><circle cx="409.300" cy="85" r="1.500" fill="none" stroke="#6c7f8e" stroke-width="0.900"/>
<polygon points="450.5,64.5 455.5,59.5 459.0,59.5 459.0,90.5 450.5,90.5" fill="#e4e4e4" stroke="#6f6f6f" stroke-width="1" stroke-linejoin="round"/><polygon points="457.5,62.3 462.5,59.5 471.8,59.5 466.5,62.3" fill="#82c4f2"/><polygon points="457.5,62.3 466.5,62.3 466.5,90.6 457.5,90.6" fill="#5aa9e2"/><polygon points="466.5,62.3 471.8,59.5 471.8,86.0 466.5,90.6" fill="#3b8fd1"/><path d="M469 74.500H476" stroke="#222" stroke-width="1.100"/><path d="M475 72.200L479.300 74.500L475 76.800z" fill="#222"/>
<path d="M492.400 90.600V66.900L499.500 59.400H511.700Q523.600 61 523.600 73.600V83.100L516.100 90.600z" fill="#c6c6c6" stroke="#7a7a7a" stroke-width="0.900" stroke-linejoin="round"/><path d="M492.400 66.900L499.500 59.400H511.700L504.600 64.500Q498 65.500 492.400 66.900z" fill="#efefef"/><path d="M504.600 64.500Q516.500 67 517.100 79.700L523.600 73.600Q523.600 61 511.700 59.400z" fill="#5aa9e2"/><path d="M492.400 66.900Q498 65.500 504.600 64.500Q516.500 67 517.100 79.700L516.100 90.600H492.400z" fill="#dadada"/><path d="M492.400 90.600V66.900L499.500 59.400H511.700Q523.600 61 523.600 73.600V83.100L516.100 90.600z" fill="none" stroke="#7a7a7a" stroke-width="0.900" stroke-linejoin="round"/>
<polygon points="535.4,67.5 542.2,59.4 566.6,59.4 559.8,67.5" fill="#f3f3f3" stroke="#7a7a7a" stroke-width="0.9" stroke-linejoin="round"/><polygon points="559.8,67.5 566.6,59.4 566.6,82.5 559.8,90.6" fill="#c9c9c9" stroke="#7a7a7a" stroke-width="0.9" stroke-linejoin="round"/><polygon points="535.4,67.5 559.8,67.5 559.8,90.6 535.4,90.6" fill="#e8e8e8" stroke="#7a7a7a" stroke-width="0.9" stroke-linejoin="round"/><rect x="539.100" y="71.300" width="17" height="15.500" fill="#f4f8fb"/><polygon points="539.1,71.3 546.5,71.3 546.5,80.4 539.1,86.8" fill="#3b8fd1"/><polygon points="546.5,80.4 556.1,80.4 556.1,86.8 539.1,86.8" fill="#82c4f2"/>
<polygon points="588.9,62.8 593.6,59.4 609.9,59.4 606.5,62.8" fill="#90caf5"/><polygon points="606.5,62.8 609.9,59.4 609.9,76.3 606.5,80.4" fill="#559fdb"/><polygon points="588.9,62.8 606.5,62.8 606.5,80.4 588.9,80.4" fill="#66aee6"/><polygon points="578.4,73.6 582.8,69.2 589.0,69.2 589.0,73.6" fill="#90caf5"/><polygon points="596.7,80.4 599.7,80.4 599.7,86.5 596.7,90.6" fill="#559fdb"/><polygon points="578.4,73.6 596.7,73.6 596.7,90.6 578.4,90.6" fill="#66aee6"/>
<polygon points="623.5,80.5 628.0,77.0 651.5,77.0 647.0,80.5" fill="#f2f2f2" stroke="#7a7a7a" stroke-width="0.7" stroke-linejoin="round"/><polygon points="647.0,80.5 651.5,77.0 651.5,86.0 647.0,89.5" fill="#bdbdbd" stroke="#7a7a7a" stroke-width="0.7" stroke-linejoin="round"/><polygon points="623.5,80.5 647.0,80.5 647.0,89.5 623.5,89.5" fill="#dedede" stroke="#7a7a7a" stroke-width="0.7" stroke-linejoin="round"/><path d="M620.500 77.600H648.500L653.500 71.500" fill="none" stroke="#fff" stroke-width="2.600"/><path d="M620.500 77.600H648.500L653.500 71.500" fill="none" stroke="#7fb8e4" stroke-width="0.900"/><polygon points="623.5,63.5 628.0,59.0 651.5,59.0 647.0,63.5" fill="#82c4f2"/><polygon points="647.0,63.5 651.5,59.0 651.5,70.5 647.0,75.0" fill="#3b8fd1"/><polygon points="623.5,63.5 647.0,63.5 647.0,75.0 623.5,75.0" fill="#5aa9e2"/>
<path d="M668 74.800H692M680 63V86.500" stroke="#2e2e2e" stroke-width="1.700" fill="none"/><path d="M680 59.500L684.800 66H675.200zM680 90.200L684.800 83.600H675.200zM664.200 74.800L670.800 70V79.600zM695.600 74.800L689 70V79.600z" fill="#2e2e2e"/>
<path d="M726 66.500L731.500 61.500L748 60V78L741 84L735 86z" fill="#b9dcf3" opacity="0.750"/><path d="M743.600 80.500V64.500Q744.500 60.500 746.800 59.500Q749.600 61 749.900 65.500V80.800L747.800 79.500V73.500L745.500 74.500V81z" fill="#d9d9d9" stroke="#8e8e8e" stroke-width="0.900" stroke-linejoin="round"/><path d="M735.200 86.300V70.500Q736 66 738.300 64.800Q741.300 66.300 741.800 71V86.600L739.500 85V78.800L737.300 79.800V86.800z" fill="#d6d6d6" stroke="#8e8e8e" stroke-width="0.900" stroke-linejoin="round"/><path d="M718.300 90.500V75Q719.500 68.600 726 68.300Q732.500 68.600 733.700 75V90.600L729.300 88.800V80.500H722.800V89z" fill="#d3d3d3" stroke="#8e8e8e" stroke-width="0.900" stroke-linejoin="round"/><path d="M722.800 80.500V73.500H729.300V80.500" fill="#e4e4e4" stroke="#a5a5a5" stroke-width="0.600"/><path d="M733.500 72L735 74.500L736.500 71.500M741.500 67.500L743 70V64.500" fill="none" stroke="#4d8fcc" stroke-width="0.900"/>
<polygon points="761.0,77.5 761.0,77.5 773.5,77.5 773.5,77.5" fill="#eee" stroke="#7a7a7a" stroke-width="0.7" stroke-linejoin="round"/><polygon points="773.5,77.5 773.5,77.5 773.5,90.5 773.5,90.5" fill="#bbb" stroke="#7a7a7a" stroke-width="0.7" stroke-linejoin="round"/><polygon points="761.0,77.5 773.5,77.5 773.5,90.5 761.0,90.5" fill="#dadada" stroke="#7a7a7a" stroke-width="0.7" stroke-linejoin="round"/><polygon points="773.5,77.5 778.5,74.0 791.5,74.0 786.5,77.5" fill="#f0f0f0" stroke="#7a7a7a" stroke-width="0.7" stroke-linejoin="round"/><polygon points="786.5,77.5 791.5,74.0 791.5,87.0 786.5,90.5" fill="#b9b9b9" stroke="#7a7a7a" stroke-width="0.7" stroke-linejoin="round"/><polygon points="773.5,77.5 786.5,77.5 786.5,90.5 773.5,90.5" fill="#dedede" stroke="#7a7a7a" stroke-width="0.7" stroke-linejoin="round"/><polygon points="761.0,66.0 764.5,63.0 778.0,63.0 774.5,66.0" fill="#82c4f2"/><polygon points="774.5,66.0 778.0,63.0 778.0,74.5 774.5,77.5" fill="#3b8fd1"/><polygon points="761.0,66.0 774.5,66.0 774.5,77.5 761.0,77.5" fill="#5aa9e2"/><polygon points="792.0,66.5 788.3,67.9 789.9,71.4 786.4,69.8 785.0,73.5 783.6,69.8 780.1,71.4 781.7,67.9 778.0,66.5 781.7,65.1 780.1,61.6 783.6,63.2 785.0,59.5 786.4,63.2 789.9,61.6 788.3,65.1" fill="#f5a01c"/>
<path d="M806.500 87.500V69L814 61.500Q817 60.500 817.500 63V72L814 73V79L809.500 86z" fill="#d3d3d3" stroke="#8a8a8a" stroke-width="0.900"/><path d="M821.500 71L826.500 64L833.800 70.500V88L829 84.500L821.500 82z" fill="#d9d9d9" stroke="#8a8a8a" stroke-width="0.900"/><path d="M824.500 65V72.500M826.500 67V74" stroke="#3f86c4" stroke-width="0.900"/><path d="M821.500 71Q825 74.500 829 71.500" stroke="#9fc5e6" stroke-width="1.600" fill="none"/>
<polygon points="861.3,65.0 864.8,59.5 888.5,59.5 885.0,65.0" fill="#efefef" stroke="#7a7a7a" stroke-width="0.9" stroke-linejoin="round"/><polygon points="885.0,65.0 888.5,59.5 888.5,81.0 885.0,86.5" fill="#c6c6c6" stroke="#7a7a7a" stroke-width="0.9" stroke-linejoin="round"/><polygon points="861.3,65.0 885.0,65.0 885.0,86.5 861.3,86.5" fill="#e0e0e0" stroke="#7a7a7a" stroke-width="0.9" stroke-linejoin="round"/><rect x="878" y="79" width="16" height="13" fill="#f0f0f0"/><path d="M879.3 82.0h13.600M879.3 88.0h13.600" stroke="#555" stroke-width="1.500"/><path d="M883.3 79.5v5" stroke="#3a7fc0" stroke-width="2"/><path d="M888.9 85.5v5" stroke="#555" stroke-width="2"/>
<rect x="904.500" y="59.600" width="29" height="28" fill="#f4f4f4" stroke="#5c5c5c" stroke-width="1"/><rect x="904.500" y="59.600" width="29" height="5" fill="#5c5c5c"/><rect x="906.500" y="61" width="3.600" height="1.800" fill="#eee"/><path d="M908 68.500H931V83.500H908zM908 73.500H931M908 78.500H931M913 68.500V83.500M917.800 68.500V83.500" fill="none" stroke="#666" stroke-width="0.900"/><rect x="921" y="79" width="16" height="13" fill="#f0f0f0"/><path d="M922.3 82.0h13.600M922.3 88.0h13.600" stroke="#555" stroke-width="1.500"/><path d="M926.3 79.5v5" stroke="#3a7fc0" stroke-width="2"/><path d="M931.9 85.5v5" stroke="#555" stroke-width="2"/>
<path d="M965.500 88.500V75L969.500 71.500L978 77.500V88.500z" fill="#dcdcdc" stroke="#8a8a8a" stroke-width="0.900"/><polygon points="977.5,60.6 993.3,75.5 982.5,85.0 968.5,70.0" fill="#e58d4a"/><polygon points="973.0,68.5 985.0,71.0 978.0,79.0" fill="#f4c6a0"/><polygon points="980.0,72.0 984.0,69.5 980.0,86.0 977.5,88.5" fill="#55b674"/>
<polygon points="1008.5,66.0 1015.0,59.8 1022.0,59.8 1016.0,66.0 1016.0,89.6 1008.5,89.6" fill="#dedede" stroke="#7d7d7d" stroke-width="1" stroke-linejoin="round"/><polygon points="1017.0,68.5 1025.5,60.0 1025.5,81.5 1017.0,89.5" fill="#55b674"/><polygon points="1029.5,69.5 1037.8,60.3 1037.8,79.5 1029.5,88.8" fill="#e58d4a"/>
<rect x="1079" y="76.800" width="28" height="6.300" fill="#f2a21e"/><path d="M1081.0 77v1.6M1083.5 77v2.5M1086.0 77v1.6M1088.5 77v2.5M1091.0 77v1.6M1093.5 77v2.5M1096.0 77v1.6M1098.5 77v2.5M1101.0 77v1.6M1103.5 77v2.5M1106.0 77v1.6" stroke="#8a5a10" stroke-width="0.700"/><path d="M1079.500 67V77M1106.500 67V77" stroke="#666" stroke-width="0.900"/><path d="M1082 71.300H1104" stroke="#555" stroke-width="0.900"/><path d="M1080.300 71.300L1084 69.300V73.300zM1105.700 71.300L1102 69.300V73.300z" fill="#555"/>
<rect x="1146" y="60.400" width="24" height="7.200" rx="1" fill="#4f9bd8"/><rect x="1146" y="60.400" width="24" height="2.500" rx="1" fill="#6db3e8"/><rect x="1151.300" y="67.600" width="13" height="23" rx="1.500" fill="#5aa5de"/><path d="M1151.300 70.0h13M1151.300 72.2h13M1151.300 74.4h13M1151.300 76.6h13M1151.300 78.8h13M1151.300 81.0h13M1151.300 83.2h13M1151.300 85.4h13M1151.300 87.6h13M1151.300 89.8h13" stroke="#8cc4ee" stroke-width="0.800"/><path d="M1160.500 83.900H1177M1168.800 75.600V92.200" stroke="#f0f0f0" stroke-width="7" fill="none"/><path d="M1162 83.900H1175.800M1168.900 77V90.800" stroke="#2f9d46" stroke-width="4.400" fill="none"/>
<rect x="1188" y="60" width="29" height="28.500" fill="#6db6f0"/><path d="M1188 78Q1194.500 69.500 1199 73.500L1206 82.500L1211 79L1217 85.500V88.500H1188z" fill="#3d8fd0"/><circle cx="1209" cy="68" r="3" fill="#e2ffec"/>
<rect x="1247.600" y="55.700" width="38.900" height="38.500" fill="#2b94d4"/><rect x="1251.300" y="59.300" width="27.700" height="21.300" fill="none" stroke="#7fe6e6" stroke-width="0.900" stroke-dasharray="3.500 2"/><path d="M1272.200 73.600V88.300L1275.600 85.300L1278.200 90.500L1280.300 89.500L1277.800 84.500L1282.500 84z" fill="#f4fbff"/>
<!-- topbar -->
<g fill="#545454"><rect x="9.0" y="9.2" width="3.8" height="3.8"/><rect x="14.1" y="9.2" width="3.8" height="3.8"/><rect x="19.2" y="9.2" width="3.8" height="3.8"/><rect x="9.0" y="14.3" width="3.8" height="3.8"/><rect x="14.1" y="14.3" width="3.8" height="3.8"/><rect x="19.2" y="14.3" width="3.8" height="3.8"/><rect x="9.0" y="19.4" width="3.8" height="3.8"/><rect x="14.1" y="19.4" width="3.8" height="3.8"/><rect x="19.2" y="19.4" width="3.8" height="3.8"/></g>
<path d="M42 8.3h8.2l4.8 4.8V23.8H42z" fill="#545454"/><path d="M50.2 8.3v4.8h4.8z" fill="#8a8a8a"/>
<path d="M61.5 13.2h6l-3 4z" fill="#545454"/>
<path d="M87 10.5q0-1.5 1.5-1.5H98l3 3v9.5q0 1.5-1.5 1.5h-11q-1.500 0-1.500-1.500z" fill="#545454"/>
<rect x="90" y="9.600" width="7.500" height="4.600" fill="#cdcdcd"/><rect x="94.6" y="10.200" width="2" height="3.400" fill="#545454"/><rect x="90" y="17.500" width="8" height="5.500" fill="#cdcdcd"/>
<path d="M126 10.800L120.800 15.500L126 20.200" fill="none" stroke="#545454" stroke-width="1.900"/><path d="M121.500 15.500H127.500q5 0 5 6.300" fill="none" stroke="#545454" stroke-width="1.900"/>
<path d="M140.200 13.200h6l-3 4z" fill="#545454"/>
<path d="M167 10.800L172.200 15.500L167 20.200" fill="none" stroke="#8e8e8e" stroke-width="1.900"/><path d="M171.500 15.500H165.500q-5 0-5 6.300" fill="none" stroke="#8e8e8e" stroke-width="1.900"/>
<path d="M179.200 13.200h6l-3 4z" fill="#8e8e8e"/>
<path d="M214 12L206.500 19h2.300v6h4v-3.600h2.400V25h4v-6h2.300z" fill="#808080"/>
<g transform="translate(910.9 19.1) scale(1.16 1.2)"><path d="M0 -6.300L6.200 -3.600V3.400L0 6.600L-6.200 3.400V-3.600z" fill="#e8762c"/><path d="M0 -6.300L6.200 -3.600L0 -0.600L-6.200 -3.600z" fill="#f59a55"/><path d="M0 -0.600L6.200 -3.600V3.400L0 6.600z" fill="#cf5f1c"/></g>
<text x="924.2" y="23.2" font-size="11" fill="#4c4c4c" stroke="#4c4c4c" stroke-width="0.15" textLength="98.8" lengthAdjust="spacingAndGlyphs">TRMNL Stand v4*</text>
<path d="M1688 14.400l7.600 7.600M1695.600 14.400l-7.600 7.600" stroke="#6f6f6f" stroke-width="1.300" fill="none"/>
<path d="M1714.800 17.500h13.200M1721.400 11v13" stroke="#777" stroke-width="2.300" fill="none"/>
<g transform="translate(1754.800 16.200)"><path d="M-4.6 5.2A7 7 0 1 1 6.2 3.2" fill="none" stroke="#5a5a5a" stroke-width="2.1"/><path d="M-5.6 6.6A7.6 7.6 0 0 0 4.8 6.2" fill="none" stroke="#5a5a5a" stroke-width="1.7"/><path d="M1.2 -4.8L4.8 -1.2L0.6 3.6Q-1.6 4.6 -3 3.2Q-4.4 1.6 -3.2 -0.4z" fill="#5a5a5a"/><path d="M3 -6.4L6.6 -2.8" stroke="#5a5a5a" stroke-width="1.5"/></g>
<g transform="translate(1788 16.200)"><circle r="7.900" fill="none" stroke="#5a5a5a" stroke-width="1.100"/><circle r="6.200" fill="#5a5a5a"/><path d="M0 -4.200V0.600H3.600" fill="none" stroke="#d8d8d8" stroke-width="1.400"/></g>
<g transform="translate(1820.500 16)"><path d="M0 -8q1.300 0 1.300 1.400q3.700 1 3.700 5.600q0 3.500 1.800 5.200v1h-13.600v-1q1.800-1.700 1.800-5.200q0-4.600 3.700-5.600q0-1.400 1.300-1.400z" fill="#5a5a5a"/><path d="M-1.800 6.600h3.600q0 1.600-1.800 1.600t-1.800-1.600z" fill="#5a5a5a"/></g>
<g transform="translate(1854 16.200)"><circle r="7.900" fill="#5a5a5a"/><text x="0" y="4.600" font-size="13" font-weight="bold" fill="#d4d4d4" text-anchor="middle">?</text></g>
<g transform="translate(1895 16.500)"><clipPath id="avc"><circle r="11.500"/></clipPath><circle r="11.500" fill="#aab6c9"/><g clip-path="url(#avc)"><ellipse cx="0.500" cy="-3" rx="4.400" ry="5.600" fill="#4d5d75"/><path d="M-9 12q0-7.500 6-8.500l1-2h5l1 2q6 1 6 8.500z" fill="#4d5d75"/></g></g>
<circle cx="1911.900" cy="8" r="3.600" fill="#6658ee"/>
<!-- bottom -->
<rect x="4.600" y="1001.600" width="298.800" height="23.400" fill="#ededed" stroke="#cbcbcb" stroke-width="1"/>
<text x="29.3" y="1016.7" font-size="10.4" fill="#4d4d4d" stroke="#4d4d4d" stroke-width="0.30" font-weight="normal" textLength="60.7" lengthAdjust="spacingAndGlyphs">COMMENTS</text>
<circle cx="287.300" cy="1013.200" r="4.600" fill="#2c2c2c"/><path d="M284.600 1013.200h5.400M287.300 1010.500v5.400" stroke="#eee" stroke-width="1.300"/>
<rect x="842" y="1000" width="236.800" height="24" fill="#f0f0f0"/>
<g fill="none" stroke="#5a5a5a" stroke-width="1"><ellipse cx="853.200" cy="1011.700" rx="2.800" ry="7.600"/><path d="M848 1009.500Q845 1011.500 848.500 1013.800Q853 1016 858 1013.800Q861.500 1011.500 858.500 1009.500"/></g><path d="M851.500 1010.500h3.200M853.100 1009v3.200M855.500 1007.500h2M856.500 1006.500v2" stroke="#3f86c4" stroke-width="0.900"/><path d="M846.500 1010.300l1.300-2.300l1.300 2.300z" fill="#5a5a5a"/>
<path d="M866.4 1010.2h5.2l-2.6 3.1z" fill="#333"/>
<rect x="878.400" y="1008.600" width="15" height="10.400" fill="#f4f4f4" stroke="#5a5a5a" stroke-width="1.200"/><rect x="881.400" y="1012.400" width="9" height="3.800" fill="#9a9a9a" stroke="#5a5a5a" stroke-width="0.800"/><path d="M879.500 1008.600L884 1004.800V1008.600M885 1008.600L891.500 1004.800V1008.600" fill="#f4f4f4" stroke="#5a5a5a" stroke-width="1"/>
<path d="M907.500 1013.500Q904.500 1010.500 905.500 1009.500Q906.800 1008.800 909 1011.200V1005.800Q909.700 1004.600 910.600 1005.800V1010V1004.600Q911.400 1003.400 912.400 1004.600V1010V1005Q913.300 1004 914.200 1005.200V1010.500V1006.800Q915.200 1005.800 916 1007V1014Q916 1019.300 911.800 1019.300Q909 1019.300 907.500 1013.500z" fill="#fafafa" stroke="#5a5a5a" stroke-width="1"/>
<path d="M917 1010.500Q919.500 1008.500 919.800 1010L916 1015.500" fill="#fafafa" stroke="#5a5a5a" stroke-width="1"/>
<circle cx="935.300" cy="1011" r="4.600" fill="#f6f9fb" stroke="#5a5a5a" stroke-width="1.200"/><path d="M938.700 1014.600L942.600 1018.600" stroke="#333" stroke-width="2.300" stroke-linecap="round"/><path d="M941.800 1007h4M943.800 1005v4M941.800 1010.600h4" stroke="#5a5a5a" stroke-width="0.900"/>
<path d="M956.400 1006V1019.200H967M962 1004.600H971.600V1013" fill="none" stroke="#5a5a5a" stroke-width="1" stroke-dasharray="2 1.400"/><circle cx="962.800" cy="1010.500" r="6" fill="#f1f7f7" stroke="#5a5a5a" stroke-width="1.200"/><path d="M967.200 1015.200L971.200 1019.200" stroke="#333" stroke-width="2.300" stroke-linecap="round"/>
<path d="M977.3 1010.2h5.2l-2.6 3.1z" fill="#333"/>
<rect x="989.400" y="1004.600" width="15.200" height="11.400" fill="#f4f4f4" stroke="#5a5a5a" stroke-width="1.200"/><rect x="991.300" y="1006.500" width="11.400" height="7.600" fill="#8fa8d6"/><path d="M995 1016v2h-1.500v1.300h7v-1.300h-1.500v-2" fill="#bbb" stroke="#5a5a5a" stroke-width="0.700"/>
<path d="M1007.5 1010.2h5.2l-2.6 3.1z" fill="#333"/>
<rect x="1020.300" y="1004.300" width="15.400" height="15.400" fill="#e6e6e6"/><path d="M1020.3 1004.300v15.400M1020.300 1004.3h15.400M1023.4 1004.300v15.400M1020.300 1007.4h15.400M1026.5 1004.300v15.400M1020.300 1010.5h15.400M1029.5 1004.300v15.400M1020.300 1013.5h15.400M1032.6 1004.300v15.400M1020.300 1016.6h15.400M1035.7 1004.300v15.400M1020.300 1019.7h15.400" stroke="#6a6a6a" stroke-width="0.900"/>
<path d="M1038.5 1010.2h5.2l-2.6 3.1z" fill="#333"/>
<rect x="1051" y="1004.800" width="14.800" height="13.800" fill="#9bb0d4" stroke="#5c6f8f" stroke-width="1"/><path d="M1058.400 1004.800v13.800M1051 1011.700h14.800" stroke="#e4e9f2" stroke-width="1.1"/>
<path d="M1069.3 1010.2h5.2l-2.6 3.1z" fill="#333"/>
<rect x="12" y="1051.900" width="1.800" height="11.900" fill="#555"/><path d="M23.200 1051.900V1063.800L14.200 1057.850z" fill="#555"/>
<path d="M46.400 1052.300V1063.400L36.300 1057.850z" fill="#555"/><rect x="47.300" y="1055.400" width="1.800" height="4.900" fill="#555"/>
<path d="M62 1050.800V1064.600L73.800 1057.700z" fill="#555"/>
<rect x="86" y="1055.400" width="1.800" height="4.900" fill="#555"/><path d="M88.600 1052.300V1063.400L98.600 1057.850z" fill="#555"/>
<path d="M111.800 1051.900V1063.800L120.800 1057.850z" fill="#555"/><rect x="121.200" y="1051.900" width="1.800" height="11.900" fill="#555"/>
<rect x="154" y="1071.900" width="865" height="1.600" fill="#c6c6c6"/>
<rect x="153.0" y="1067.500" width="1.400" height="5" fill="#c6c6c6"/><rect x="177.0" y="1067.500" width="1.400" height="5" fill="#c6c6c6"/><rect x="201.0" y="1067.500" width="1.400" height="5" fill="#c6c6c6"/><rect x="225.0" y="1067.500" width="1.400" height="5" fill="#c6c6c6"/><rect x="249.0" y="1067.500" width="1.400" height="5" fill="#c6c6c6"/><rect x="273.0" y="1067.500" width="1.400" height="5" fill="#c6c6c6"/><rect x="297.0" y="1067.500" width="1.400" height="5" fill="#c6c6c6"/><rect x="321.0" y="1067.500" width="1.400" height="5" fill="#c6c6c6"/><rect x="345.0" y="1067.500" width="1.400" height="5" fill="#c6c6c6"/><rect x="369.0" y="1067.500" width="1.400" height="5" fill="#c6c6c6"/><rect x="393.0" y="1067.500" width="1.400" height="5" fill="#c6c6c6"/><rect x="417.0" y="1067.500" width="1.400" height="5" fill="#c6c6c6"/><rect x="441.0" y="1067.500" width="1.400" height="5" fill="#c6c6c6"/><rect x="465.0" y="1067.500" width="1.400" height="5" fill="#c6c6c6"/><rect x="489.0" y="1067.500" width="1.400" height="5" fill="#c6c6c6"/><rect x="513.0" y="1067.500" width="1.400" height="5" fill="#c6c6c6"/><rect x="537.0" y="1067.500" width="1.400" height="5" fill="#c6c6c6"/><rect x="561.0" y="1067.500" width="1.400" height="5" fill="#c6c6c6"/><rect x="585.0" y="1067.500" width="1.400" height="5" fill="#c6c6c6"/><rect x="609.0" y="1067.500" width="1.400" height="5" fill="#c6c6c6"/><rect x="633.0" y="1067.500" width="1.400" height="5" fill="#c6c6c6"/><rect x="657.0" y="1067.500" width="1.400" height="5" fill="#c6c6c6"/><rect x="681.0" y="1067.500" width="1.400" height="5" fill="#c6c6c6"/><rect x="705.0" y="1067.500" width="1.400" height="5" fill="#c6c6c6"/><rect x="729.0" y="1067.500" width="1.400" height="5" fill="#c6c6c6"/><rect x="753.0" y="1067.500" width="1.400" height="5" fill="#c6c6c6"/><rect x="777.0" y="1067.500" width="1.400" height="5" fill="#c6c6c6"/><rect x="801.0" y="1067.500" width="1.400" height="5" fill="#c6c6c6"/><rect x="825.0" y="1067.500" width="1.400" height="5" fill="#c6c6c6"/><rect x="849.0" y="1067.500" width="1.400" height="5" fill="#c6c6c6"/><rect x="873.0" y="1067.500" width="1.400" height="5" fill="#c6c6c6"/><rect x="897.0" y="1067.500" width="1.400" height="5" fill="#c6c6c6"/><rect x="921.0" y="1067.500" width="1.400" height="5" fill="#c6c6c6"/><rect x="945.0" y="1067.500" width="1.400" height="5" fill="#c6c6c6"/><rect x="969.0" y="1067.500" width="1.400" height="5" fill="#c6c6c6"/><rect x="993.0" y="1067.500" width="1.400" height="5" fill="#c6c6c6"/><rect x="1017.0" y="1067.500" width="1.400" height="5" fill="#c6c6c6"/>
<rect x="146.2" y="1048.5" width="13" height="13" fill="#f6f8fa" stroke="#7f9dc0" stroke-width="0.900"/><path d="M149.2 1051.5h6.500M149.2 1051.5v6.500" stroke="#8a9bb0" stroke-width="0.800" stroke-dasharray="2 1"/><path d="M155.7 1051.5q0 6.500 -6.500 6.500" fill="none" stroke="#8a9bb0" stroke-width="0.800"/><path d="M155.2 1062.9l6-6" stroke="#f1b24a" stroke-width="2.600" stroke-linecap="round"/><path d="M160.4 1057.7l1.300-1.300" stroke="#e0483a" stroke-width="2.600" stroke-linecap="round"/><path d="M154.3 1063.8l1-1" stroke="#555" stroke-width="1.400"/>
<polygon points="170.4,1051.1 173.2,1048.5 184.7,1048.5 182.1,1051.1" fill="#86c6f2"/><polygon points="182.1,1051.1 184.7,1048.5 184.7,1059.9 182.1,1062.9" fill="#4291d0"/><rect x="170.4" y="1051.1" width="11.700" height="11.800" fill="#58a6e2"/><path d="M185.1 1049.2v11" stroke="#2d4d6a" stroke-width="0.800"/>
<polygon points="194.4,1051.1 197.2,1048.5 208.7,1048.5 206.1,1051.1" fill="#86c6f2"/><polygon points="206.1,1051.1 208.7,1048.5 208.7,1059.9 206.1,1062.9" fill="#4291d0"/><rect x="194.4" y="1051.1" width="11.700" height="11.800" fill="#58a6e2"/><path d="M209.1 1049.2v11" stroke="#2d4d6a" stroke-width="0.800"/>
<polygon points="218.4,1051.1 221.2,1048.5 232.7,1048.5 230.1,1051.1" fill="#86c6f2"/><polygon points="230.1,1051.1 232.7,1048.5 232.7,1059.9 230.1,1062.9" fill="#4291d0"/><rect x="218.4" y="1051.1" width="11.700" height="11.800" fill="#58a6e2"/><path d="M233.1 1049.2v11" stroke="#2d4d6a" stroke-width="0.800"/>
<path d="M242.2 1063.1V1051.2L245.2 1048.4H251.2Q258.1 1049.2 258.1 1056.2V1060.2L254.7 1063.1z" fill="#c6c6c6" stroke="#8c8c8c" stroke-width="0.800"/><path d="M248.7 1051.2Q254.7 1051.7 254.7 1057.2L258.1 1055.2Q258.1 1049.2 251.2 1048.4z" fill="#58a6e2"/><path d="M242.2 1051.2H248.7Q254.7 1051.7 254.7 1057.2V1063.1H242.2z" fill="#dcdcdc" stroke="#9a9a9a" stroke-width="0.600"/>
<path d="M266.2 1063.1V1051.2L269.2 1048.4H275.2Q282.1 1049.2 282.1 1056.2V1060.2L278.7 1063.1z" fill="#c6c6c6" stroke="#8c8c8c" stroke-width="0.800"/><path d="M272.7 1051.2Q278.7 1051.7 278.7 1057.2L282.1 1055.2Q282.1 1049.2 275.2 1048.4z" fill="#58a6e2"/><path d="M266.2 1051.2H272.7Q278.7 1051.7 278.7 1057.2V1063.1H266.2z" fill="#dcdcdc" stroke="#9a9a9a" stroke-width="0.600"/>
<path d="M290.2 1063.1V1051.2L293.2 1048.4H299.2Q306.1 1049.2 306.1 1056.2V1060.2L302.7 1063.1z" fill="#c6c6c6" stroke="#8c8c8c" stroke-width="0.800"/><path d="M296.7 1051.2Q302.7 1051.7 302.7 1057.2L306.1 1055.2Q306.1 1049.2 299.2 1048.4z" fill="#58a6e2"/><path d="M290.2 1051.2H296.7Q302.7 1051.7 302.7 1057.2V1063.1H290.2z" fill="#dcdcdc" stroke="#9a9a9a" stroke-width="0.600"/>
<path d="M314.2 1063.1V1051.2L317.2 1048.4H323.2Q330.1 1049.2 330.1 1056.2V1060.2L326.7 1063.1z" fill="#c6c6c6" stroke="#8c8c8c" stroke-width="0.800"/><path d="M320.7 1051.2Q326.7 1051.7 326.7 1057.2L330.1 1055.2Q330.1 1049.2 323.2 1048.4z" fill="#58a6e2"/><path d="M314.2 1051.2H320.7Q326.7 1051.7 326.7 1057.2V1063.1H314.2z" fill="#dcdcdc" stroke="#9a9a9a" stroke-width="0.600"/>
<polygon points="338.4,1051.4 341.4,1048.4 353.7,1048.4 350.7,1051.4" fill="#f2f2f2" stroke="#8c8c8c" stroke-width="0.7" stroke-linejoin="round"/><polygon points="350.7,1051.4 353.7,1048.4 353.7,1060.0 350.7,1063.0" fill="#c4c4c4" stroke="#8c8c8c" stroke-width="0.7" stroke-linejoin="round"/><rect x="338.4" y="1051.4" width="12.300" height="11.600" fill="#e8e8e8" stroke="#8c8c8c" stroke-width="0.700"/><rect x="340.4" y="1053.4" width="8" height="7.600" fill="#f8f8f8"/><polygon points="340.4,1053.4 343.7,1053.4 343.7,1058.2 340.4,1061.0" fill="#4291d0"/><polygon points="343.7,1058.2 348.4,1058.2 348.4,1061.0 340.4,1061.0" fill="#86c6f2"/>
<polygon points="362.2,1052.2 365.4,1048.7 368.9,1048.7 366.0,1052.2 366.0,1063.0 362.2,1063.0" fill="#dedede" stroke="#8c8c8c" stroke-width="0.8" stroke-linejoin="round"/><polygon points="366.7,1053.2 371.0,1048.9 371.0,1059.2 366.7,1063.0" fill="#4cb56a"/><polygon points="373.0,1053.7 377.2,1049.2 377.2,1058.2 373.0,1062.7" fill="#e8843c"/>
<polygon points="391.2,1051.2 394.2,1048.4 401.7,1048.4 398.7,1051.2" fill="#86c6f2"/><polygon points="398.7,1051.2 401.7,1048.4 401.7,1056.2 398.7,1058.7" fill="#4291d0"/><rect x="390.2" y="1051.2" width="8.500" height="8.500" fill="#f4f4f4" stroke="#777" stroke-width="0.900"/><rect x="386.4" y="1054.0" width="9" height="9" fill="#f6f6f6" stroke="#777" stroke-width="0.900"/>
<rect x="410.2" y="1048.5" width="13" height="13" fill="#f6f8fa" stroke="#7f9dc0" stroke-width="0.900"/><path d="M413.2 1051.5h6.500M413.2 1051.5v6.500" stroke="#8a9bb0" stroke-width="0.800" stroke-dasharray="2 1"/><path d="M419.7 1051.5q0 6.500 -6.500 6.500" fill="none" stroke="#8a9bb0" stroke-width="0.800"/><path d="M419.2 1062.9l6-6" stroke="#f1b24a" stroke-width="2.600" stroke-linecap="round"/><path d="M424.4 1057.7l1.300-1.300" stroke="#e0483a" stroke-width="2.600" stroke-linecap="round"/><path d="M418.3 1063.8l1-1" stroke="#555" stroke-width="1.400"/>
<polygon points="434.4,1051.1 437.2,1048.5 448.7,1048.5 446.1,1051.1" fill="#86c6f2"/><polygon points="446.1,1051.1 448.7,1048.5 448.7,1059.9 446.1,1062.9" fill="#4291d0"/><rect x="434.4" y="1051.1" width="11.700" height="11.800" fill="#58a6e2"/><path d="M449.1 1049.2v11" stroke="#2d4d6a" stroke-width="0.800"/>
<path d="M458.2 1063.1V1051.2L461.2 1048.4H467.2Q474.1 1049.2 474.1 1056.2V1060.2L470.7 1063.1z" fill="#c6c6c6" stroke="#8c8c8c" stroke-width="0.800"/><path d="M464.7 1051.2Q470.7 1051.7 470.7 1057.2L474.1 1055.2Q474.1 1049.2 467.2 1048.4z" fill="#58a6e2"/><path d="M458.2 1051.2H464.7Q470.7 1051.7 470.7 1057.2V1063.1H458.2z" fill="#dcdcdc" stroke="#9a9a9a" stroke-width="0.600"/>
<polygon points="482.2,1052.2 485.4,1048.7 488.9,1048.7 486.0,1052.2 486.0,1063.0 482.2,1063.0" fill="#dedede" stroke="#8c8c8c" stroke-width="0.8" stroke-linejoin="round"/><polygon points="486.7,1053.2 491.0,1048.9 491.0,1059.2 486.7,1063.0" fill="#4cb56a"/><polygon points="493.0,1053.7 497.2,1049.2 497.2,1058.2 493.0,1062.7" fill="#e8843c"/>
<polygon points="506.2,1052.2 509.4,1048.7 512.9,1048.7 510.0,1052.2 510.0,1063.0 506.2,1063.0" fill="#dedede" stroke="#8c8c8c" stroke-width="0.8" stroke-linejoin="round"/><polygon points="510.7,1053.2 515.0,1048.9 515.0,1059.2 510.7,1063.0" fill="#4cb56a"/><polygon points="517.0,1053.7 521.2,1049.2 521.2,1058.2 517.0,1062.7" fill="#e8843c"/>
<polygon points="530.4,1051.1 533.2,1048.5 544.7,1048.5 542.1,1051.1" fill="#86c6f2"/><polygon points="542.1,1051.1 544.7,1048.5 544.7,1059.9 542.1,1062.9" fill="#4291d0"/><rect x="530.4" y="1051.1" width="11.700" height="11.800" fill="#58a6e2"/><path d="M545.1 1049.2v11" stroke="#2d4d6a" stroke-width="0.800"/>
<polygon points="554.4,1051.1 557.2,1048.5 568.7,1048.5 566.1,1051.1" fill="#86c6f2"/><polygon points="566.1,1051.1 568.7,1048.5 568.7,1059.9 566.1,1062.9" fill="#4291d0"/><rect x="554.4" y="1051.1" width="11.700" height="11.800" fill="#58a6e2"/><path d="M569.1 1049.2v11" stroke="#2d4d6a" stroke-width="0.800"/>
<polygon points="578.4,1051.1 581.2,1048.5 592.7,1048.5 590.1,1051.1" fill="#86c6f2"/><polygon points="590.1,1051.1 592.7,1048.5 592.7,1059.9 590.1,1062.9" fill="#4291d0"/><rect x="578.4" y="1051.1" width="11.700" height="11.800" fill="#58a6e2"/><path d="M593.1 1049.2v11" stroke="#2d4d6a" stroke-width="0.800"/>
<polygon points="610.2,1048.7 610.2,1062.7 602.7,1062.7" fill="#e4e4e4" stroke="#9a9a9a" stroke-width="0.7" stroke-linejoin="round"/><polygon points="610.2,1048.7 617.0,1062.7 610.2,1062.7" fill="#58a6e2"/>
<polygon points="626.4,1051.1 629.2,1048.5 640.7,1048.5 638.1,1051.1" fill="#86c6f2"/><polygon points="638.1,1051.1 640.7,1048.5 640.7,1059.9 638.1,1062.9" fill="#4291d0"/><rect x="626.4" y="1051.1" width="11.700" height="11.800" fill="#58a6e2"/><path d="M641.1 1049.2v11" stroke="#2d4d6a" stroke-width="0.800"/>
<rect x="650.2" y="1048.5" width="13" height="13" fill="#f6f8fa" stroke="#7f9dc0" stroke-width="0.900"/><path d="M653.2 1051.5h6.500M653.2 1051.5v6.500" stroke="#8a9bb0" stroke-width="0.800" stroke-dasharray="2 1"/><path d="M659.7 1051.5q0 6.500 -6.500 6.500" fill="none" stroke="#8a9bb0" stroke-width="0.800"/><path d="M659.2 1062.9l6-6" stroke="#f1b24a" stroke-width="2.600" stroke-linecap="round"/><path d="M664.4 1057.7l1.300-1.300" stroke="#e0483a" stroke-width="2.600" stroke-linecap="round"/><path d="M658.3 1063.8l1-1" stroke="#555" stroke-width="1.400"/>
<polygon points="674.4,1051.1 677.2,1048.5 688.7,1048.5 686.1,1051.1" fill="#86c6f2"/><polygon points="686.1,1051.1 688.7,1048.5 688.7,1059.9 686.1,1062.9" fill="#4291d0"/><rect x="674.4" y="1051.1" width="11.700" height="11.800" fill="#58a6e2"/><path d="M689.1 1049.2v11" stroke="#2d4d6a" stroke-width="0.800"/>
<polygon points="698.4,1051.1 701.2,1048.5 712.7,1048.5 710.1,1051.1" fill="#86c6f2"/><polygon points="710.1,1051.1 712.7,1048.5 712.7,1059.9 710.1,1062.9" fill="#4291d0"/><rect x="698.4" y="1051.1" width="11.700" height="11.800" fill="#58a6e2"/><path d="M713.1 1049.2v11" stroke="#2d4d6a" stroke-width="0.800"/>
<polygon points="722.4,1051.1 725.2,1048.5 736.7,1048.5 734.1,1051.1" fill="#86c6f2"/><polygon points="734.1,1051.1 736.7,1048.5 736.7,1059.9 734.1,1062.9" fill="#4291d0"/><rect x="722.4" y="1051.1" width="11.700" height="11.800" fill="#58a6e2"/><path d="M737.1 1049.2v11" stroke="#2d4d6a" stroke-width="0.800"/>
<polygon points="746.4,1051.1 749.2,1048.5 760.7,1048.5 758.1,1051.1" fill="#86c6f2"/><polygon points="758.1,1051.1 760.7,1048.5 760.7,1059.9 758.1,1062.9" fill="#4291d0"/><rect x="746.4" y="1051.1" width="11.700" height="11.800" fill="#58a6e2"/><path d="M761.1 1049.2v11" stroke="#2d4d6a" stroke-width="0.800"/>
<polygon points="770.4,1051.1 773.2,1048.5 784.7,1048.5 782.1,1051.1" fill="#86c6f2"/><polygon points="782.1,1051.1 784.7,1048.5 784.7,1059.9 782.1,1062.9" fill="#4291d0"/><rect x="770.4" y="1051.1" width="11.700" height="11.800" fill="#58a6e2"/><path d="M785.1 1049.2v11" stroke="#2d4d6a" stroke-width="0.800"/>
<polygon points="794.4,1051.1 797.2,1048.5 808.7,1048.5 806.1,1051.1" fill="#86c6f2"/><polygon points="806.1,1051.1 808.7,1048.5 808.7,1059.9 806.1,1062.9" fill="#4291d0"/><rect x="794.4" y="1051.1" width="11.700" height="11.800" fill="#58a6e2"/><path d="M809.1 1049.2v11" stroke="#2d4d6a" stroke-width="0.800"/>
<polygon points="818.4,1051.1 821.2,1048.5 832.7,1048.5 830.1,1051.1" fill="#86c6f2"/><polygon points="830.1,1051.1 832.7,1048.5 832.7,1059.9 830.1,1062.9" fill="#4291d0"/><rect x="818.4" y="1051.1" width="11.700" height="11.800" fill="#58a6e2"/><path d="M833.1 1049.2v11" stroke="#2d4d6a" stroke-width="0.800"/>
<polygon points="842.4,1051.1 845.2,1048.5 856.7,1048.5 854.1,1051.1" fill="#86c6f2"/><polygon points="854.1,1051.1 856.7,1048.5 856.7,1059.9 854.1,1062.9" fill="#4291d0"/><rect x="842.4" y="1051.1" width="11.700" height="11.800" fill="#58a6e2"/><path d="M857.1 1049.2v11" stroke="#2d4d6a" stroke-width="0.800"/>
<rect x="866.2" y="1048.5" width="13" height="13" fill="#f6f8fa" stroke="#7f9dc0" stroke-width="0.900"/><path d="M869.2 1051.5h6.500M869.2 1051.5v6.500" stroke="#8a9bb0" stroke-width="0.800" stroke-dasharray="2 1"/><path d="M875.7 1051.5q0 6.500 -6.500 6.500" fill="none" stroke="#8a9bb0" stroke-width="0.800"/><path d="M875.2 1062.9l6-6" stroke="#f1b24a" stroke-width="2.600" stroke-linecap="round"/><path d="M880.4 1057.7l1.300-1.300" stroke="#e0483a" stroke-width="2.600" stroke-linecap="round"/><path d="M874.3 1063.8l1-1" stroke="#555" stroke-width="1.400"/>
<polygon points="890.4,1051.1 893.2,1048.5 904.7,1048.5 902.1,1051.1" fill="#86c6f2"/><polygon points="902.1,1051.1 904.7,1048.5 904.7,1059.9 902.1,1062.9" fill="#4291d0"/><rect x="890.4" y="1051.1" width="11.700" height="11.800" fill="#58a6e2"/><path d="M905.1 1049.2v11" stroke="#2d4d6a" stroke-width="0.800"/>
<path d="M914.2 1063.1V1051.2L917.2 1048.4H923.2Q930.1 1049.2 930.1 1056.2V1060.2L926.7 1063.1z" fill="#c6c6c6" stroke="#8c8c8c" stroke-width="0.800"/><path d="M920.7 1051.2Q926.7 1051.7 926.7 1057.2L930.1 1055.2Q930.1 1049.2 923.2 1048.4z" fill="#58a6e2"/><path d="M914.2 1051.2H920.7Q926.7 1051.7 926.7 1057.2V1063.1H914.2z" fill="#dcdcdc" stroke="#9a9a9a" stroke-width="0.600"/>
<polygon points="938.4,1051.1 941.2,1048.5 952.7,1048.5 950.1,1051.1" fill="#86c6f2"/><polygon points="950.1,1051.1 952.7,1048.5 952.7,1059.9 950.1,1062.9" fill="#4291d0"/><rect x="938.4" y="1051.1" width="11.700" height="11.800" fill="#58a6e2"/><path d="M953.1 1049.2v11" stroke="#2d4d6a" stroke-width="0.800"/>
<path d="M962.2 1063.1V1051.2L965.2 1048.4H971.2Q978.1 1049.2 978.1 1056.2V1060.2L974.7 1063.1z" fill="#c6c6c6" stroke="#8c8c8c" stroke-width="0.800"/><path d="M968.7 1051.2Q974.7 1051.7 974.7 1057.2L978.1 1055.2Q978.1 1049.2 971.2 1048.4z" fill="#58a6e2"/><path d="M962.2 1051.2H968.7Q974.7 1051.7 974.7 1057.2V1063.1H962.2z" fill="#dcdcdc" stroke="#9a9a9a" stroke-width="0.600"/>
<polygon points="986.4,1051.1 989.2,1048.5 1000.7,1048.5 998.1,1051.1" fill="#86c6f2"/><polygon points="998.1,1051.1 1000.7,1048.5 1000.7,1059.9 998.1,1062.9" fill="#4291d0"/><rect x="986.4" y="1051.1" width="11.700" height="11.800" fill="#58a6e2"/><path d="M1001.1 1049.2v11" stroke="#2d4d6a" stroke-width="0.800"/>
<polygon points="1015.2,1051.2 1018.2,1048.4 1025.7,1048.4 1022.7,1051.2" fill="#86c6f2"/><polygon points="1022.7,1051.2 1025.7,1048.4 1025.7,1056.2 1022.7,1058.7" fill="#4291d0"/><rect x="1014.2" y="1051.2" width="8.500" height="8.500" fill="#f4f4f4" stroke="#777" stroke-width="0.900"/><rect x="1010.4" y="1054.0" width="9" height="9" fill="#f6f6f6" stroke="#777" stroke-width="0.900"/>
<path d="M1024 1041.800h12v2.800l-5 6.200v22.500h-2v-22.500l-5-6.200z" fill="#4a4a4a"/>
<g transform="translate(1899.500 1057.400)"><rect x="-1.700" y="-7.400" width="3.400" height="14.800" fill="#777" transform="rotate(0)"/><rect x="-1.700" y="-7.400" width="3.400" height="14.800" fill="#777" transform="rotate(45)"/><rect x="-1.700" y="-7.400" width="3.400" height="14.800" fill="#777" transform="rotate(90)"/><rect x="-1.700" y="-7.400" width="3.400" height="14.800" fill="#777" transform="rotate(135)"/><circle r="5.300" fill="#777"/><circle r="2.600" fill="#f0f0f0"/></g>
<!-- cursor -->
<path d="M1713.600 700.800V714.800L1716.800 711.800L1719.200 717L1721.200 716.100L1718.900 711L1723.200 710.700z" fill="#111" stroke="#fff" stroke-width="0.900" stroke-linejoin="round"/>
</svg>
</body></html>
